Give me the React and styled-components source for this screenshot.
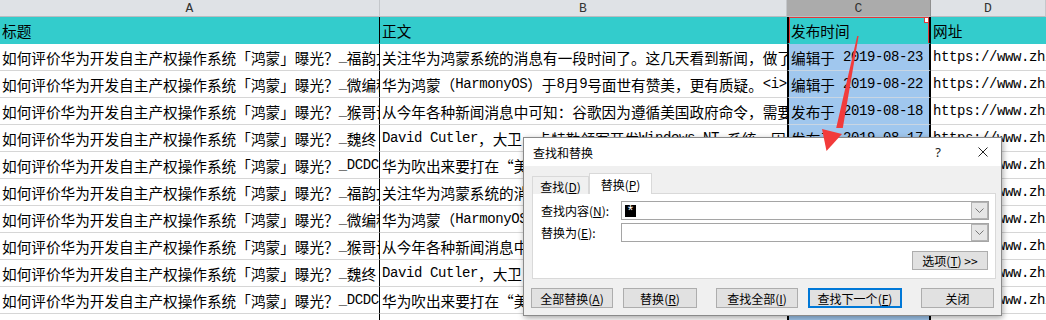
import React from 'react';
import styled, { createGlobalStyle } from 'styled-components';

const CJK = '"Noto Sans CJK SC", "Noto Sans", sans-serif';
const MONO = '"Liberation Mono", "DejaVu Sans Mono", monospace';

const GlobalStyle = createGlobalStyle`
  html, body { margin: 0; padding: 0; background: #ffffff; }
  body { overflow: hidden; font-family: ${CJK}; }
  * { box-sizing: border-box; }
`;

const Page = styled.div`
  position: relative;
  width: 1046px;
  height: 320px;
  overflow: hidden;
  background: #fff;
`;

const Sheet = styled.div`
  display: grid;
  grid-template-columns: 380px 407px 144px 115px;
  grid-template-rows: 17px;
  grid-auto-rows: 27px;
`;

const ColHead = styled.div`
  display: flex;
  align-items: center;
  justify-content: center;
  background: ${(p) => (p.$active ? '#ababab' : '#dfe2e6')};
  border-bottom: 1px solid #b9bcc0;
  border-right: 1px solid ${(p) => (p.$active ? '#8f8f8f' : '#c4c7cb')};
  font-family: ${MONO};
  font-size: 13px;
  color: #333;
`;

const colBorders = {
  A: 'border-right: 1px solid #000;',
  B: '',
  C: 'border-left: 2px solid #000; border-right: 2px solid #000;',
  D: '',
};

const tones = {
  head: { bg: '#33cccc', line: '#33cccc' },
  sel: { bg: '#a0c7ee', line: '#c9d6e3' },
  plain: { bg: '#ffffff', line: '#d6d6d6' },
};

const Cell = styled.div`
  position: relative;
  display: flex;
  align-items: center;
  padding-left: 2px;
  overflow: hidden;
  white-space: nowrap;
  font-family: ${CJK};
  font-size: 14.65px;
  color: #000;
  background: ${(p) => tones[p.$tone].bg};
  border-bottom: 1px solid ${(p) => tones[p.$tone].line};
  ${(p) => colBorders[p.$col]}
  ${(p) =>
    p.$active
      ? 'box-shadow: inset 1px 1px 0 #e03a3a, inset -1px 0 0 #e03a3a;'
      : ''}
`;

const FillHandle = styled.span`
  position: absolute;
  top: 0;
  right: 0;
  width: 5px;
  height: 6px;
  border: 1px solid #e03a3a;
  background: #fff;
`;

const Latin = styled.span`
  font-family: ${MONO};
  font-size: 14px;
  letter-spacing: -0.4px;
  white-space: pre;
`;

const Mixed = ({ text }) =>
  text
    .split(/([\x20-\x7e]+)/)
    .filter(Boolean)
    .map((s, i) =>
      /^[\x20-\x7e]+$/.test(s) ? (
        <Latin key={i}>{s}</Latin>
      ) : (
        <React.Fragment key={i}>{s}</React.Fragment>
      )
    );

/* ---------- dialog ---------- */

const Dialog = styled.div`
  position: absolute;
  left: 523px;
  top: 137px;
  width: 479px;
  border: 1px solid #8a8a8a;
  background: #f0f0f0;
  box-shadow: 1px 2px 6px rgba(0, 0, 0, 0.35);
  display: flex;
  flex-direction: column;
  font-family: ${CJK};
  font-size: 12px;
  color: #000;
  z-index: 2;
`;

const TitleBar = styled.div`
  height: 28px;
  background: #fff;
  display: flex;
  align-items: center;
  padding: 0 13px 0 9px;
`;

const Title = styled.div`
  flex: 1;
  font-size: 12px;
  color: #000;
`;

const TitleActions = styled.div`
  display: flex;
  align-items: center;
  gap: 36px;
`;

const Help = styled.span`
  font-family: "Noto Sans", sans-serif;
  font-size: 13px;
  color: #222;
  width: 8px;
  text-align: center;
`;

const Body = styled.div`
  padding: 7px 5px 7px 8px;
  display: flex;
  flex-direction: column;
`;

const Tabs = styled.div`
  display: flex;
  align-items: flex-end;
  height: 21px;
  margin-bottom: -1px;
`;

const Tab = styled.div`
  position: relative;
  z-index: ${(p) => (p.$active ? 1 : 0)};
  width: ${(p) => (p.$active ? 63 : 57)}px;
  height: ${(p) => (p.$active ? 21 : 18)}px;
  background: ${(p) => (p.$active ? '#ffffff' : '#f0f0f0')};
  border: 1px solid #d9d9d9;
  border-bottom: none;
  display: flex;
  align-items: center;
  justify-content: center;
  padding-top: ${(p) => (p.$active ? 0 : 1)}px;
`;

const Panel = styled.div`
  background: #fff;
  border: 1px solid #d9d9d9;
  padding: 7px 6px 8px 8px;
  display: flex;
  flex-direction: column;
  gap: 3px;
`;

const FieldRow = styled.div`
  display: flex;
  align-items: center;
  height: 19px;
`;

const Label = styled.div`
  width: 80px;
  white-space: nowrap;
`;

const Combo = styled.div`
  flex: 1;
  height: 19px;
  border: 1px solid #a5a5a5;
  background: #fff;
  display: flex;
  align-items: center;
`;

const ComboText = styled.div`
  flex: 1;
  display: flex;
  align-items: center;
  padding-left: 3px;
`;

const SelectedStar = styled.span`
  display: inline-flex;
  align-items: center;
  justify-content: center;
  width: 11px;
  height: 12px;
  background: #000;
  color: #fff;
  font-family: ${MONO};
  font-size: 14px;
  line-height: 12px;
  padding-top: 3px;
`;

const DropBtn = styled.div`
  width: 17px;
  height: 100%;
  background: #e6e6e6;
  box-shadow: inset 0 0 0 1px #b3b3b3;
  display: flex;
  align-items: center;
  justify-content: center;
`;

const OptionsRow = styled.div`
  display: flex;
  justify-content: flex-end;
  margin-top: 6px;
  padding-right: 1px;
`;

const Button = styled.div`
  width: ${(p) => p.$w}px;
  height: ${(p) => p.$h || 20}px;
  background: #e1e1e1;
  border: ${(p) => (p.$focus ? '2px solid #0078d7' : '1px solid #adadad')};
  display: flex;
  align-items: center;
  justify-content: center;
  white-space: nowrap;
  font-size: 12px;
`;

const ButtonRow = styled.div`
  display: flex;
  gap: 19px;
  margin-top: 9px;
  margin-left: -1px;
`;

const ButtonGroup = styled.div`
  display: flex;
  gap: 10px;
`;

const U = styled.span`
  text-decoration: underline;
  text-underline-offset: 1px;
`;

const Arrow = styled.svg`
  position: absolute;
  left: 0;
  top: 0;
  width: 1046px;
  height: 320px;
  pointer-events: none;
  z-index: 5;
`;

const Key = ({ k }) => (
  <>
    (<U>{k}</U>)
  </>
);

const suffixes = ['福韵文化', '微编程', '猴哥说', '魏终', 'DCDC手机'];
const bodies = [
  '关注华为鸿蒙系统的消息有一段时间了。这几天看到新闻，做了一些了解',
  '华为鸿蒙（HarmonyOS）于8月9号面世有赞美，更有质疑。<i>',
  '从今年各种新闻消息中可知：谷歌因为遵循美国政府命令，需要',
  'David Cutler，大卫·卡特勒领军开发Windows NT 系统，因此',
  '华为吹出来要打在“美国人的屁股上”的鸿蒙系统',
];
const dates = [
  '编辑于 2019-08-23',
  '编辑于 2019-08-22',
  '发布于 2019-08-18',
  '发布于 2019-08-17',
  '发布于 2019-08-16',
];

const rows = Array.from({ length: 11 }, (_, i) => ({
  a: `如何评价华为开发自主产权操作系统「鸿蒙」曝光？_${suffixes[i % 5]}`,
  b: bodies[i % 5],
  c: dates[i % 5],
  d: 'https://www.zhihu.com/question/333386914/answer/7',
}));

const Chevron = () => (
  <svg width="9" height="5" viewBox="0 0 9 5">
    <path d="M0.5 0.5 L4.5 4.5 L8.5 0.5" fill="none" stroke="#777" strokeWidth="1" />
  </svg>
);

export default function App() {
  return (
    <Page>
      <GlobalStyle />
      <Sheet>
        <ColHead>A</ColHead>
        <ColHead>B</ColHead>
        <ColHead $active>C</ColHead>
        <ColHead>D</ColHead>

        <Cell $col="A" $tone="head">标题</Cell>
        <Cell $col="B" $tone="head">正文</Cell>
        <Cell $col="C" $tone="head" $active>
          发布时间
          <FillHandle />
        </Cell>
        <Cell $col="D" $tone="head">网址</Cell>

        {rows.map((r, i) => (
          <React.Fragment key={i}>
            <Cell $col="A" $tone="plain">
              <Mixed text={r.a} />
            </Cell>
            <Cell $col="B" $tone="plain">
              <Mixed text={r.b} />
            </Cell>
            <Cell $col="C" $tone="sel">
              <Mixed text={r.c} />
            </Cell>
            <Cell $col="D" $tone="plain">
              <Mixed text={r.d} />
            </Cell>
          </React.Fragment>
        ))}
      </Sheet>

      <Dialog>
        <TitleBar>
          <Title>查找和替换</Title>
          <TitleActions>
            <Help>?</Help>
            <svg width="10" height="10" viewBox="0 0 10 10">
              <path d="M0.5 0.5 L9.5 9.5 M9.5 0.5 L0.5 9.5" stroke="#222" strokeWidth="1" />
            </svg>
          </TitleActions>
        </TitleBar>
        <Body>
          <Tabs>
            <Tab>
              查找<Key k="D" />
            </Tab>
            <Tab $active>
              替换<Key k="P" />
            </Tab>
          </Tabs>
          <Panel>
            <FieldRow>
              <Label>
                查找内容<Key k="N" />:
              </Label>
              <Combo>
                <ComboText>
                  <SelectedStar>*</SelectedStar>
                </ComboText>
                <DropBtn>
                  <Chevron />
                </DropBtn>
              </Combo>
            </FieldRow>
            <FieldRow>
              <Label>
                替换为<Key k="E" />:
              </Label>
              <Combo>
                <ComboText />
                <DropBtn>
                  <Chevron />
                </DropBtn>
              </Combo>
            </FieldRow>
            <OptionsRow>
              <Button $w={76} $h={19}>
                选项<Key k="T" />&nbsp;&gt;&gt;
              </Button>
            </OptionsRow>
          </Panel>
          <ButtonRow>
            <ButtonGroup>
              <Button $w={82}>
                全部替换<Key k="A" />
              </Button>
              <Button $w={74}>
                替换<Key k="R" />
              </Button>
            </ButtonGroup>
            <ButtonGroup>
              <Button $w={82}>
                查找全部<Key k="I" />
              </Button>
              <Button $w={94} $focus>
                查找下一个<Key k="F" />
              </Button>
            </ButtonGroup>
            <Button $w={73}>关闭</Button>
          </ButtonRow>
        </Body>
      </Dialog>

      <Arrow viewBox="0 0 1046 320">
        <polygon points="857.2,36 858.6,36 842.8,128 836.2,128" fill="#f23b3b" />
        <polygon points="822,129 842,134 826.5,151" fill="#f23b3b" />
      </Arrow>
    </Page>
  );
}
